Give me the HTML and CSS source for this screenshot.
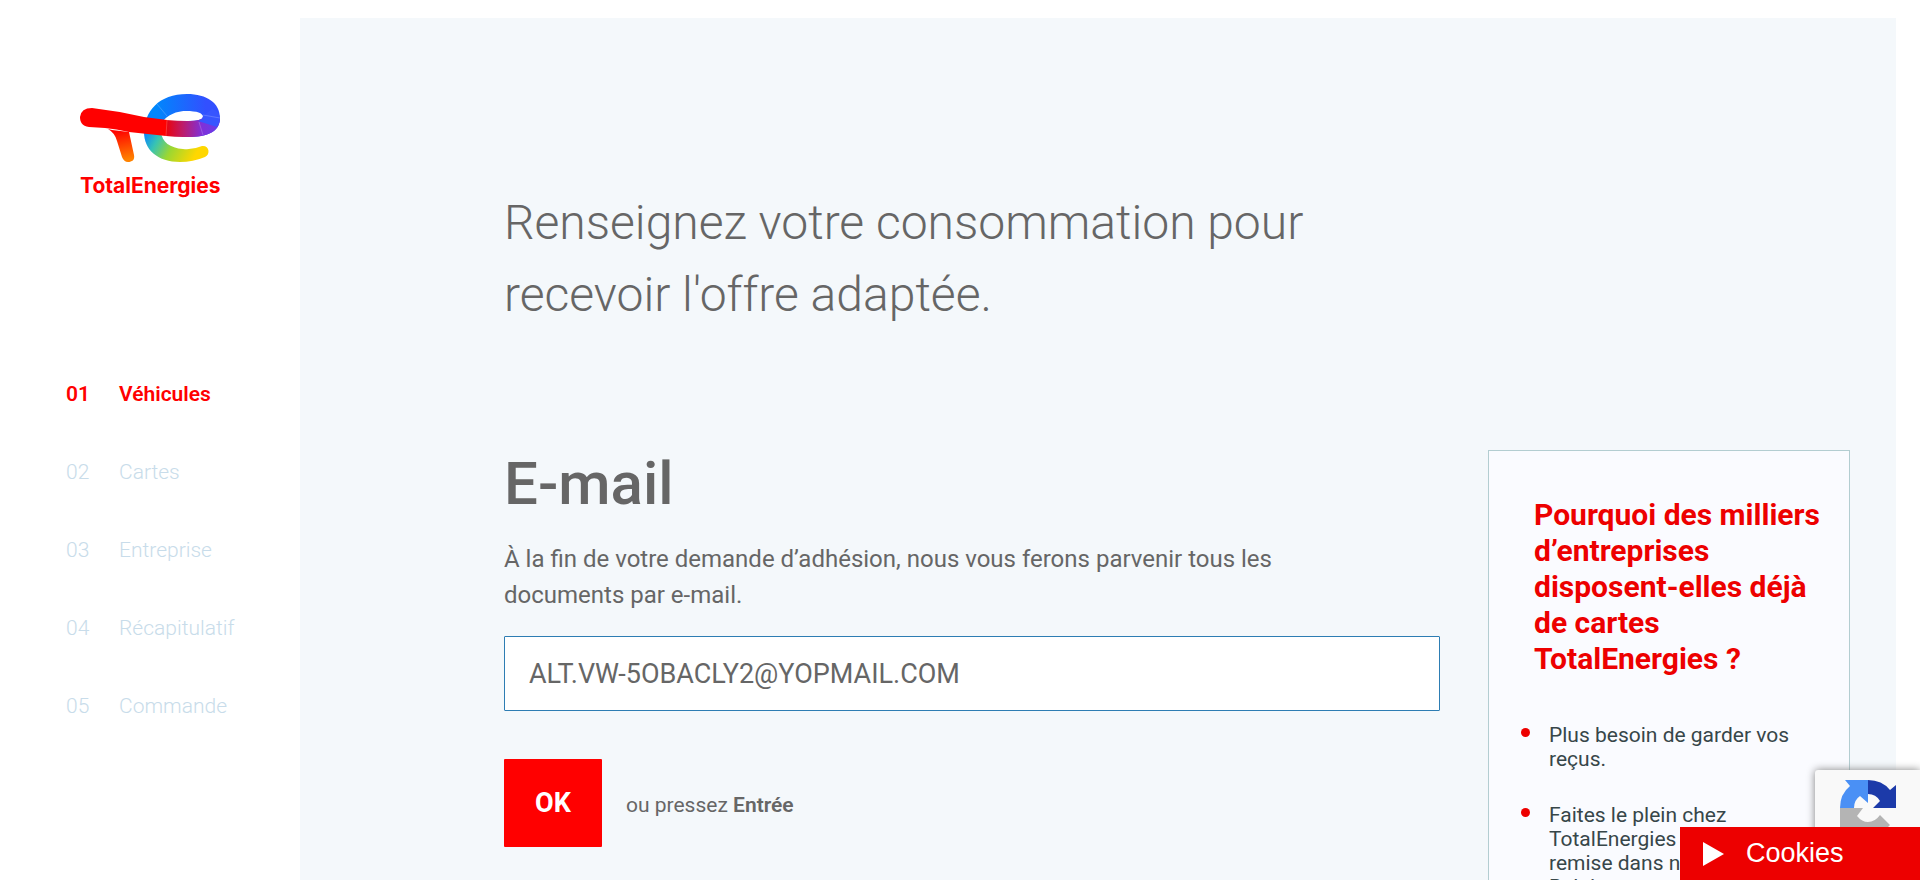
FILE: index.html
```html
<!DOCTYPE html>
<html lang="fr">
<head>
<meta charset="utf-8">
<title>TotalEnergies - Commande de cartes</title>
<link rel="stylesheet" href="styles.css">
</head>
<body>
<div class="page">
  <header class="sidebar">
    <a class="logo" href="#" aria-label="TotalEnergies">
      <svg viewBox="0 0 180 130" width="180" height="130" aria-hidden="true">
        <defs>
          <linearGradient id="bar" gradientUnits="userSpaceOnUse" x1="104" y1="0" x2="158" y2="0">
            <stop offset="0" stop-color="#f00000"/><stop offset=".35" stop-color="#bd1c6b"/><stop offset=".7" stop-color="#8030d8"/><stop offset="1" stop-color="#6a3ce8"/>
          </linearGradient>
          <linearGradient id="leg" gradientUnits="userSpaceOnUse" x1="60" y1="50" x2="66" y2="80">
            <stop offset="0" stop-color="#ff0000"/><stop offset="1" stop-color="#ff8200"/>
          </linearGradient>
          <linearGradient id="top" gradientUnits="userSpaceOnUse" x1="96" y1="0" x2="146" y2="0">
            <stop offset="0" stop-color="#0087fc"/><stop offset="1" stop-color="#3250ff"/>
          </linearGradient>
          <linearGradient id="bottom" gradientUnits="userSpaceOnUse" x1="86" y1="52" x2="134" y2="78">
            <stop offset="0" stop-color="#0a87fa"/><stop offset=".25" stop-color="#37c3b4"/><stop offset=".55" stop-color="#9bd732"/><stop offset="1" stop-color="#ffd700"/>
          </linearGradient>
        </defs>
        <path d="M84 52C84 70 98 82 120 82Q133 82 145 77C151 74 149 65 142 66Q133 70 123 69C110 68 102 62 101 52Z" fill="url(#bottom)"/>
        <path d="M84 54C84 31 99 14 127 14C147 14 160 23 160 38C160 52 147 57 127 57L128 41Q142 41 143 37C143 33 137 31 126 31C111 31 101 40 99 50Z" fill="url(#top)"/>
        <path d="M106 40Q118 41 127 41Q142 41 143 37L160 38C160 52 147 58 123 57Q115 57 106 56Z" fill="url(#bar)"/>
        <path d="M143 36Q143 40 138 41L157 47Q160 42 160 38Q159 31 152 29Z" fill="#3755ff"/>
        <path d="M52 50L69 52L74 75C75 80 72 82 68 82Q64 82 62 77L57 61Q55 53 48 49Z" fill="url(#leg)"/>
        <path d="M32 28Q58 31 84 37L107 40L106 56L69 52Q56 49 45 48L29 47C22 46 20 42 20 37Q21 28 32 28Z" fill="#ff0000"/>
        <path d="M97 24L107 36M143 35L160 38M139 42L143 55M107 40L106 56" stroke="#fff" stroke-width=".5" opacity=".4"/>
        <text class="logo-name" x="20" y="113">TotalEnergies</text>
      </svg>
    </a>
    <nav aria-label="Étapes">
      <ol class="steps">
        <li class="step step-active" aria-current="step"><span>01</span><span>Véhicules</span></li>
        <li class="step"><span>02</span><span>Cartes</span></li>
        <li class="step"><span>03</span><span>Entreprise</span></li>
        <li class="step"><span>04</span><span>Récapitulatif</span></li>
        <li class="step"><span>05</span><span>Commande</span></li>
      </ol>
    </nav>
  </header>
  <main class="content">
    <h1 class="headline">Renseignez votre consommation pour recevoir l'offre adaptée.</h1>
    <div class="columns">
      <form class="form">
        <label class="form-title" for="email">E-mail</label>
        <p class="form-hint" id="email-hint">À la fin de votre demande d’adhésion, nous vous ferons parvenir tous les documents par e-mail.</p>
        <input class="field" id="email" type="email" value="ALT.VW-5OBACLY2@YOPMAIL.COM" aria-describedby="email-hint">
        <div class="actions">
          <button class="ok" type="submit">OK</button>
          <p class="enter">ou pressez <strong>Entrée</strong></p>
        </div>
      </form>
      <aside class="benefits">
        <h2 class="benefits-title">Pourquoi des milliers d’entreprises disposent-elles déjà de cartes TotalEnergies ?</h2>
        <ul class="benefits-list">
          <li>Plus besoin de garder vos reçus.</li>
          <li>Faites le plein chez TotalEnergies avec une remise dans nos stations Belgique.</li>
        </ul>
      </aside>
    </div>
  </main>
</div>
<div class="captcha">
  <svg viewBox="0 0 56 56" width="56" height="56" role="img" aria-label="reCAPTCHA">
    <path d="M28 0V23L20 16Q14 20 14 28H0Q0 14 10 6L5 0Z" fill="#4a90f5"/>
    <path d="M28 0Q42 0 50 10L56 5V28H33L40 21Q36 14 28 14Z" fill="#1c3aa9"/>
    <path d="M0 28H23L17 36Q22 42 28 42Q35 42 40 35L50 45Q41 56 28 56Q16 56 9 47L0 55Z" fill="#b4b4b4"/>
  </svg>
</div>
<button class="cookies" type="button">
  <svg viewBox="0 0 21 24" width="21" height="24" aria-hidden="true"><path d="M0 0L21 12L0 24Z" fill="#fff"/></svg>
  Cookies
</button>
</body>
</html>
```
FILE: styles.css
```css
* {
  box-sizing: border-box;
}

body {
  margin: 0;
  height: 100vh;
  overflow: hidden;
  background: #fff;
  color: #666;
  font-family: Roboto, "Liberation Sans", sans-serif;
}

.page {
  display: grid;
  grid-template-columns: 300px minmax(0, 1fr);
  min-height: 100vh;
  padding: 18px 24px 0 0;
}

.sidebar {
  padding: 62px 0 0 60px;
}

.logo {
  display: block;
  width: 180px;
}

.logo svg {
  display: block;
}

.logo-name {
  fill: #f00;
  font: 700 21px Inter, sans-serif;
}

.steps {
  margin: 0;
  padding: 172px 0 0 6px;
  list-style: none;
}

.step {
  display: grid;
  grid-template-columns: 53px 1fr;
  height: 78px;
  color: #c8dcea;
  font-size: 21px;
  font-weight: 300;
  line-height: 24px;
}

.step-active {
  color: #f00;
  font-weight: 600;
}

.content {
  padding: 169px 46px 0 204px;
  background: #f4f8fb;
}

.headline {
  max-width: 900px;
  margin: 0;
  font-size: 48px;
  font-weight: 300;
  line-height: 72px;
}

.columns {
  display: grid;
  grid-template-columns: minmax(0, 1fr) 362px;
  gap: 48px;
  padding-top: 119px;
}

.form-title {
  display: block;
  font-size: 60px;
  font-weight: 500;
  line-height: 68px;
}

.form-hint {
  max-width: 800px;
  margin: 23px 0 0;
  font-size: 24px;
  line-height: 36px;
}

.field {
  display: block;
  width: 100%;
  height: 75px;
  margin-top: 23px;
  padding: 0 24px;
  border: 1px solid #2d7db3;
  border-radius: 1px;
  background: #fff;
  color: #666;
  font-family: inherit;
  font-size: 27px;
}

.actions {
  display: flex;
  align-items: center;
  gap: 24px;
  margin-top: 48px;
}

.ok {
  width: 98px;
  height: 88px;
  padding: 0;
  border: 0;
  border-radius: 1px;
  background: #f00;
  color: #fff;
  font-family: inherit;
  font-size: 27px;
  font-weight: 700;
}

.enter {
  margin: 0;
  padding-top: 4px;
  font-size: 21px;
  line-height: 24px;
}

.enter strong {
  font-weight: 600;
}

.benefits {
  padding: 46px 24px 0 45px;
  border: 1px solid #b3cdd1;
  background: #fafbff;
}

.benefits-title {
  margin: 0;
  color: #ed0000;
  font-size: 30px;
  font-weight: 700;
  line-height: 36px;
}

.benefits-list {
  display: grid;
  gap: 32px;
  margin: 0;
  padding: 46px 24px 0 0;
  color: #374649;
  font-size: 21px;
  line-height: 24px;
  list-style: none;
}

.benefits-list li {
  position: relative;
  padding-left: 15px;
}

.benefits-list li::before {
  content: "";
  position: absolute;
  top: 5px;
  left: -13px;
  width: 9px;
  height: 9px;
  border-radius: 50%;
  background: #ed0000;
}

.captcha {
  position: fixed;
  right: 0;
  bottom: 20px;
  width: 105px;
  height: 90px;
  padding: 10px 0 0 25px;
  border-radius: 3px 0 0 3px;
  background: #f9f9f9;
  box-shadow: 0 0 8px #808080;
}

.cookies {
  position: fixed;
  right: 0;
  bottom: 0;
  display: flex;
  align-items: center;
  gap: 22px;
  width: 240px;
  height: 53px;
  padding: 0 0 0 23px;
  border: 0;
  background: #ed0000;
  color: #fff;
  font-family: "Liberation Sans", Arial, sans-serif;
  font-size: 27px;
}
```
